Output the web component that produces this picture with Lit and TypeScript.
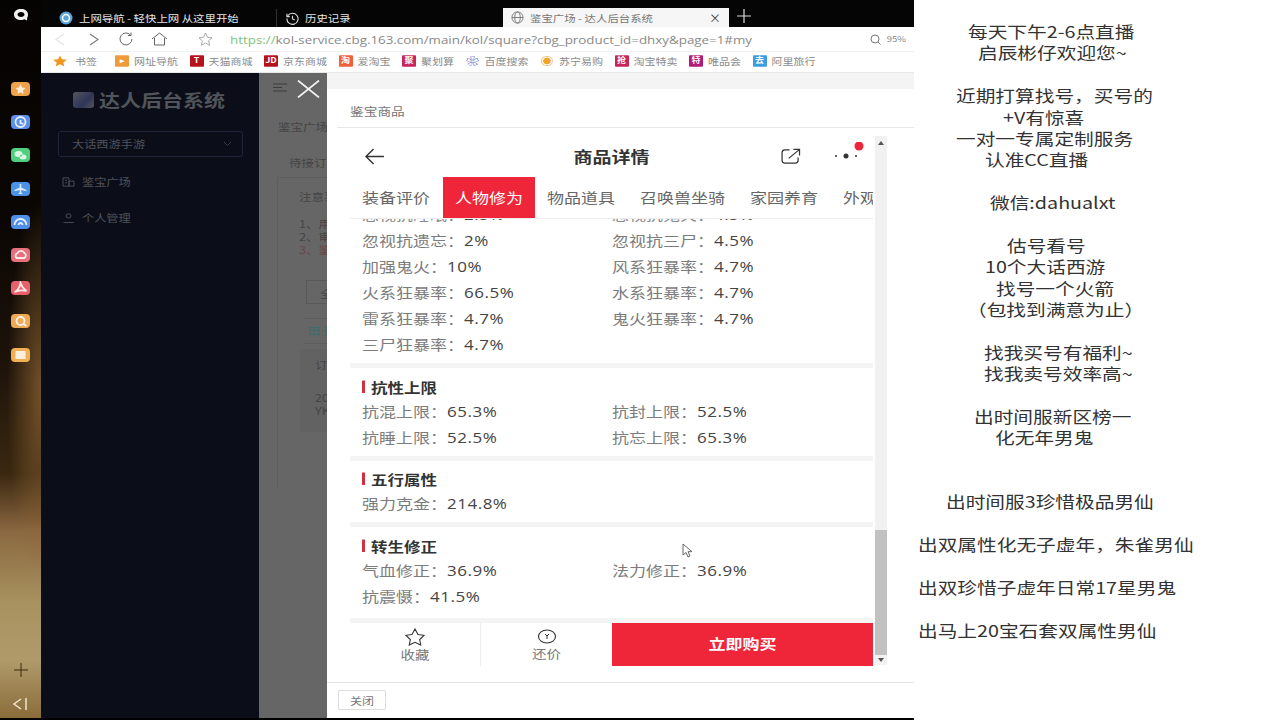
import { LitElement, html, css, svg } from "lit";
import { customElement } from "lit/decorators.js";

const lines: [string, number][] = [
  ["每天下午2-6点直播", 54],
  ["启辰彬仔欢迎您~", 64],
  ["", 0],
  ["近期打算找号，买号的", 42],
  ["+V有惊喜", 89],
  ["一对一专属定制服务", 42],
  ["认准CC直播", 71],
  ["", 0],
  ["微信:dahualxt", 76],
  ["", 0],
  ["估号看号", 93],
  ["10个大话西游", 71],
  ["找号一个火箭", 82],
  ["（包找到满意为止）", 53],
  ["", 0],
  ["找我买号有福利~", 70],
  ["找我卖号效率高~", 70],
  ["", 0],
  ["出时间服新区榜一", 60],
  ["化无年男鬼", 81],
  ["", 0],
  ["", 0],
  ["出时间服3珍惜极品男仙", 32],
  ["", 0],
  ["出双属性化无子虚年，朱雀男仙", 4],
  ["", 0],
  ["出双珍惜子虚年日常17星男鬼", 4],
  ["", 0],
  ["出马上20宝石套双属性男仙", 4],
];

const bookmarks: [string, string, string][] = [
  ["T", "#b5121b", "天猫商城"],
  ["JD", "#b5121b", "京东商城"],
  ["淘", "#f0603a", "爱淘宝"],
  ["聚", "#c8265a", "聚划算"],
];
const bookmarks2: [string, string, string][] = [
  ["抢", "#c8265a", "淘宝特卖"],
  ["特", "#b01a7a", "唯品会"],
  ["去", "#3d9be0", "阿里旅行"],
];

const dock: [string, string, boolean][] = [
  ["#eea24a", "M0-5 1.500-1.500 5-1 2.500 1.500 3 5 0 3.200-3 5-2.500 1.500-5-1-1.500-1.500Z", true],
  ["#5b8fe8", "M0-5A5 5 0 1 1 0 5 5 5 0 1 1 0-5M0-2V1L3 2", false],
  ["#4fd07e", "M-6-1a4 3 0 1 1 8 0a4 3 0 1 1-8 0M-1 2a3.500 2.500 0 1 0 7 0a3.500 2.500 0 1 0-7 0", true],
  ["#4a93e6", "M-.8-5H.8V-1.500L6 1V2.300L.8 1V3.500L2.500 5H-2.500L-.8 3.500V1L-6 2.300V1L-.8-1.500Z", true],
  ["#4f8fe8", "M-6 3A6 6 0 0 1 6 3M-2 3A2 2 0 0 1 2 3", false],
  ["#e8707c", "M-4 3A3 3 0 0 1-3-2 4 4 0 0 1 4-2 3 3 0 0 1 4 3Z", false],
  ["#e8606a", "M0-5C-1 0-3 3-6 4-2 2 2 2 6 3 3 1 1-2 0-5Z", false],
  ["#eeaa55", "M-4 0A4 4 0 1 1 4 0 4 4 0 1 1-4 0M3 3 6 5", false],
  ["#f0b056", "M-5-4H5V4H-5Z", true],
];

type Row = [string, string, string?, string?];
const rows: Row[] = [
  ["忽视抗遗忘：", "2%", "忽视抗三尸：", "4.5%"],
  ["加强鬼火：", "10%", "风系狂暴率：", "4.7%"],
  ["火系狂暴率：", "66.5%", "水系狂暴率：", "4.7%"],
  ["雷系狂暴率：", "4.7%", "鬼火狂暴率：", "4.7%"],
  ["三尸狂暴率：", "4.7%"],
];

const tabNames: [string, string][] = [
  ["装备评价", "t0"],
  ["人物修为", "on"],
  ["物品道具", "t2"],
  ["召唤兽坐骑", "t2"],
  ["家园养育", "t2"],
  ["外观", "t3"],
];

@customElement("app-root")
export class AppRoot extends LitElement {
  static styles = css`
    :host { display: block; width: 1280px; height: 720px; overflow: hidden; background: #fff;
      font-family: "Noto Sans CJK SC", "Open Sans", sans-serif; }
    .sy { display: inline-block; transform: scaleY(0.83); white-space: nowrap; }
    .root { display: flex; width: 1280px; height: 720px; }
    .shot { width: 914px; height: 720px; background: #000; display: flex; flex: none; padding-bottom: 2px; box-sizing: border-box; }
    .dock { width: 41px; flex: none; display: flex; flex-direction: column; align-items: center;
      background:
        radial-gradient(ellipse 34px 190px at 100% 390px, rgba(140, 100, 50, 0.75), rgba(140, 100, 50, 0)),
        linear-gradient(180deg, #050302 0%, #0a0603 30%, #1c120a 50%, #3a2710 66%, #8a6840 74%, #a8925f 84%, #b09a6a 92%, #8a6c3a 100%);
      padding-top: 6px; box-sizing: border-box; }
    .logo { width: 20px; height: 18px; margin-bottom: 58px; }
    .app { width: 19px; height: 14px; border-radius: 4px; margin-bottom: 19.2px; display: flex; flex: none; }
    .app svg { width: 19px; height: 14px; }
    .spacer { flex: 1; }
    .plus { width: 14px; height: 14px; margin-bottom: 20px; }
    .collapse { width: 18px; height: 14px; margin-bottom: 7px; }
    .browser { flex: 1; display: flex; flex-direction: column; min-width: 0; }
    .tabs { height: 27px; flex: none; display: flex; align-items: stretch; background: #050505; font-size: 11.4px; color: #e4e4e4; }
    .tab { display: flex; align-items: center; gap: 6px; padding-left: 18px; }
    .tab1 { width: 236px; box-sizing: border-box; border-right: 1px solid #333; margin: 9px 0 0; }
    .tab2 { width: 226px; box-sizing: border-box; padding-left: 9px; margin-top: 9px; }
    .tab3 { width: 226px; box-sizing: border-box; background: #f6f6f6; color: #777; margin-top: 8px; padding-left: 8px; }
    .tab3 .x { margin-left: auto; margin-right: 8px; color: #444; font-size: 12px; }
    .newtab { width: 16px; height: 16px; margin: 8px 0 0 7px; }
    .toolbar { height: 25px; flex: none; background: #fff; display: flex; align-items: center; color: #888; border-bottom: 1px solid #f0f0f0; box-sizing: border-box; }
    .nav { display: flex; align-items: center; width: 189px; flex: none; }
    .nav svg { flex: none; }
    .nav .n1 { margin-left: 14px; }
    .nav .n2 { margin-left: 24px; }
    .nav .n3 { margin-left: 19px; }
    .nav .n4 { margin-left: 17px; }
    .nav .n5 { margin-left: 30px; }
    .url { font-family: "Open Sans", sans-serif; font-size: 13.37px; color: #888; padding-top: 1px; }
    .url b { font-weight: 400; color: #7cc47c; }
    .zoomv { margin-left: auto; padding-right: 8px; display: flex; align-items: center; gap: 6px; font-size: 9.5px; color: #888; }
    .bookmarks { height: 20px; flex: none; background: #fff; display: flex; align-items: center; font-size: 11px; color: #8a8a8a; padding: 0 0 2px 12px; box-sizing: border-box; }
    .bm { display: flex; align-items: center; gap: 5px; margin-right: 11.500px; white-space: nowrap; transform: scaleY(0.83); flex: none; }
    .bm.first { gap: 8px; margin-right: 18px; }
    .ic { width: 14px; height: 14px; font-size: 9px; font-weight: 700; color: #fff; text-align: center; line-height: 14px; border-radius: 1px; flex: none; }
    .page { flex: 1; display: flex; min-height: 0; position: relative; border-top: 1px solid #e8e8e8; }
    .side { width: 218px; flex: none; background: #0b0e18; color: #585b62; display: flex; flex-direction: column; }
    .brand { display: flex; align-items: center; gap: 5px; padding: 14px 0 0 32px; font-size: 21px; font-weight: 700; color: #51545a; height: 39px; box-sizing: border-box; line-height: 24px; }
    .brand i { width: 21px; height: 16px; border-radius: 3px; background: linear-gradient(135deg, #55565e, #2e3557 60%, #555); flex: none; }
    .select { margin: 19px 0 0 17px; width: 185px; height: 26px; border: 1px solid #20243a; border-radius: 3px; display: flex; align-items: center; justify-content: space-between; padding: 0 10px 0 13px; box-sizing: border-box; font-size: 12.2px; color: #4f525a; }
    .menu { display: flex; align-items: center; gap: 7px; padding-left: 21px; font-size: 12.2px; height: 18px; color: #4f525a; transform: scaleY(0.83); }
    .menu.first { margin-top: 16px; margin-bottom: 18px; }
    .dim { width: 68px; flex: none; background: linear-gradient(#5d5d5d, #5d5d5d) 18px 104px / 1px 310px no-repeat, #666; display: flex; flex-direction: column; color: #444; font-size: 12.5px; overflow: hidden; white-space: nowrap; }
    .dim .hb { width: 14px; height: 9px; margin: 10px 0 0 14px; flex: none; }
    .dim .crumb { margin: 27px 0 0 19px; height: 16px; line-height: 16px; transform: scaleY(0.83); flex: none; }
    .dim .card { margin: 20px 0 0 30px; height: 16px; line-height: 16px; transform: scaleY(0.83); flex: none; }
    .dim .note { margin: 6px 0 0 18px; border-top: 1px solid #5d5d5d; padding: 12px 0 0 22px; height: 103px; box-sizing: border-box; line-height: 13px; flex: none; }
    .dim .note p { margin: 0; transform: scaleY(0.83); }
    .dim .note .l1 { margin-top: 14px; }
    .dim .note .red { color: #6a4545; }
    .dim .fbox { margin: 0 0 0 47px; width: 60px; height: 24px; border: 1px solid #5a5a5a; padding: 3px 0 0 13px; box-sizing: border-box; flex: none; }
    .dim .tbl { margin: 14px 0 0 44px; border-top: 1px solid #5d5d5d; border-bottom: 1px solid #5d5d5d; height: 26px; padding-left: 5px; box-sizing: border-box; color: #3b6b6b; font-size: 12px; line-height: 24px; flex: none; }
    .dim .tbl2 { margin: 5px 0 0 41px; background: #626262; height: 83px; padding: 9px 0 0 15px; box-sizing: border-box; line-height: 13px; flex: none; }
    .dim .tbl2 div { transform: scaleY(0.83); transform-origin: 0 50%; }
    .dim .tbl2 .d1 { margin-top: 20px; }
    .closex { position: absolute; left: 256px; top: 7px; width: 23px; height: 18px; }
    .modal { width: 587px; flex: none; background: #fff; display: flex; flex-direction: column; min-width: 0; }
    .mtop { height: 16px; flex: none; background: #f4f4f4; }
    .mtitle { height: 39px; flex: none; display: flex; align-items: center; font-size: 13.700px; color: #777; border-bottom: 1px solid #e8e8e8; box-sizing: border-box; margin-left: 10px; padding: 6px 0 0 13px; }
    .mbody { flex: 1; min-height: 0; display: flex; padding: 8px 0 0 23px; }
    .phone { width: 523px; flex: none; display: flex; flex-direction: column; height: 530px; position: relative; }
    .head { height: 41px; flex: none; display: flex; align-items: center; justify-content: center; position: relative; font-size: 19px; font-weight: 700; color: #333; padding-bottom: 2px; box-sizing: border-box; }
    .head .back { position: absolute; left: 14px; top: 12px; }
    .head .share { position: absolute; left: 431px; top: 12px; }
    .head .dots { position: absolute; left: 484px; top: 6px; }
    .tabsbar { height: 41px; flex: none; display: flex; align-items: stretch; font-size: 17px; color: #666; overflow: hidden; white-space: nowrap; padding-left: 12px; box-sizing: border-box; line-height: 39px; }
    .tabsbar > div { flex: none; }
    .tabsbar .t2 { margin-right: 25px; }
    .tabsbar .on { background: #ef2639; color: #fff; width: 92px; text-align: center; margin: 0 12px 0 13px; }
    .scrolled { flex: 1; min-height: 0; overflow: hidden; border-top: 1px solid #eee; position: relative; }
    .cut { height: 9px; overflow: hidden; position: relative; }
    .cut .row { position: absolute; left: 0; right: 0; top: -17px; color: #888; }
    .row { display: flex; height: 26px; align-items: center; font-size: 17px; color: #7c7c7c; padding: 0 0 4px 12px; box-sizing: border-box; transform: scaleY(0.83); }
    .cell { width: 250px; flex: none; white-space: nowrap; }
    .cell b { font-weight: 400; color: #444; letter-spacing: 0.5px; font-family: "Open Sans", sans-serif; }
    .sep { height: 5px; background: #f4f4f4; margin: 5px 0 0 0; }
    .sep.last { margin-top: 8px; }
    .gt { display: flex; align-items: center; gap: 6px; padding: 0 0 3px 12px; box-sizing: border-box; font-size: 16.500px; font-weight: 700; color: #333; height: 20px; margin-top: 9.500px; margin-bottom: 1px; transform: scaleY(0.83); }
    .gt i { width: 3px; height: 15px; background: #d1303f; flex: none; }
    .actions { height: 43px; flex: none; display: flex; background: #fff; position: absolute; left: 0; right: 0; bottom: 0; }
    .act { display: flex; flex-direction: column; align-items: center; justify-content: center; font-size: 14.500px; color: #777; line-height: 15px; gap: 1px; }
    .act.a { width: 131px; border-right: 1px solid #eee; box-sizing: border-box; }
    .act.b { width: 131px; box-sizing: border-box; }
    .buy { flex: 1; background: #ef2639; color: #fff; font-size: 17px; font-weight: 700; display: flex; align-items: center; justify-content: center; padding-bottom: 4px; box-sizing: border-box; }
    .cursor { position: absolute; left: 332px; top: 407px; }
    .sb { width: 12px; flex: none; background: #f1f1f1; height: 529px; display: flex; flex-direction: column; margin-left: 2px; }
    .sb .sp { height: 394px; display: flex; justify-content: center; padding-top: 5px; box-sizing: border-box; flex: none; }
    .sb .th { height: 125px; background: #c1c1c1; flex: none; }
    .sb .dn { flex: 1; display: flex; justify-content: center; align-items: center; }
    .mfoot { height: 36px; flex: none; border-top: 1px solid #e6e6e6; padding: 7px 0 0 11px; box-sizing: border-box; }
    .btn { width: 48px; height: 20px; border: 1px solid #ddd; box-sizing: border-box; font-size: 12px; color: #777; display: flex; align-items: center; justify-content: center; border-radius: 1px; }
    .right { flex: 1; padding-top: 20px; font-size: 19.700px; line-height: 21.390px; color: #333; white-space: nowrap; }
    .ln { height: 21.390px; transform: scaleY(0.83); }
  `;

  private row(r: Row) {
    return html`<div class="row">
      <div class="cell">${r[0]}<b>${r[1]}</b></div>
      ${r[2] ? html`<div class="cell">${r[2]}<b>${r[3]}</b></div>` : ""}
    </div>`;
  }

  private bm(b: [string, string, string]) {
    return html`<div class="bm"><span class="ic" style="background:${b[1]}">${b[0]}</span>${b[2]}</div>`;
  }

  render() {
    return html`<div class="root">
      <div class="shot">
        <div class="dock">
          <svg class="logo" viewBox="0 0 20 18"><path d="M10 3c-4 0-7 2-7 5.500S6 14 10 14c1.500 0 2.500-.3 3.500-.8L16 14.500l.3-3c.5-.8.7-1.800.7-3C17 5 14 3 10 3Zm0 3c2 0 3.500 1 3.500 2.500S12 11 10 11 6.500 10 6.500 8.500 8 6 10 6Z" fill="#f2f2f2"/></svg>
          ${dock.map(([c, d, f]) => html`<div class="app" style="background:${c}">
            <svg viewBox="-9.500 -7 19 14">${f
              ? svg`<path d=${d} fill="#fff" opacity=".8"/>`
              : svg`<path d=${d} fill="none" stroke="#fff" stroke-width="1.800" opacity=".85"/>`}</svg>
          </div>`)}
          <div class="spacer"></div>
          <svg class="plus" viewBox="0 0 14 14"><path d="M7 0v14M0 7h14" stroke="#3a2a10" stroke-width="1"/></svg>
          <svg class="collapse" viewBox="0 0 18 14"><path d="M9 2 2 7l7 5M14 1v12" fill="none" stroke="#efe6d2" stroke-width="1.500"/></svg>
        </div>
        <div class="browser">
          <div class="tabs">
            <div class="tab tab1">
              <svg width="14" height="14" viewBox="0 0 14 14"><circle cx="7" cy="7" r="6.500" fill="#5aa6dc"/><circle cx="7" cy="7" r="3.500" fill="none" stroke="#fff" stroke-width="1.500"/></svg>
              <span class="sy">上网导航 - 轻快上网 从这里开始</span>
            </div>
            <div class="tab tab2">
              <svg width="13" height="13" viewBox="0 0 14 14"><path d="M2 4a6 6 0 1 1-1 3M1 2v3h3M7 4v3.500l2.500 1" fill="none" stroke="#ddd" stroke-width="1.200"/></svg>
              <span class="sy">历史记录</span>
            </div>
            <div class="tab tab3">
              <svg width="13" height="13" viewBox="0 0 14 14"><g fill="none" stroke="#777"><circle cx="7" cy="7" r="6"/><ellipse cx="7" cy="7" rx="3" ry="6"/><path d="M1 7h12"/></g></svg>
              <span class="sy">鉴宝广场 - 达人后台系统</span>
              <span class="x">×</span>
            </div>
            <svg class="newtab" viewBox="0 0 16 16"><path d="M8 1v14M1 8h14" stroke="#ddd" stroke-width="1.200"/></svg>
          </div>
          <div class="toolbar">
            <div class="nav">
              <svg class="n1" width="10" height="13" viewBox="0 0 10 13"><path d="M9 1 1 6.500 9 12" fill="none" stroke="#e3e3e3" stroke-width="1.100"/></svg>
              <svg class="n2" width="10" height="13" viewBox="0 0 10 13"><path d="M1 1l8 5.500L1 12" fill="none" stroke="#777" stroke-width="1.100"/></svg>
              <svg class="n3" width="16" height="14" viewBox="0 0 16 14"><path d="M12.500 3a6 6 0 1 0 1.500 4M13 .5V3.500H10" fill="none" stroke="#666" stroke-width="1"/></svg>
              <svg class="n4" width="17" height="14" viewBox="0 0 17 14"><path d="M1 7l7.500-6L16 7M3.500 6v7h10V6" fill="none" stroke="#666" stroke-width="1"/></svg>
              <svg class="n5" width="15" height="14" viewBox="0 0 15 14"><path d="M7.500 1l2 4.300 4.500.5-3.400 3 1 4.500-4.100-2.300-4.100 2.300 1-4.500-3.400-3 4.500-.5Z" fill="none" stroke="#aaa" stroke-width="1"/></svg>
            </div>
            <span class="url sy"><b>https://</b>kol-service.cbg.163.com/main/kol/square?cbg_product_id=dhxy&page=1#my</span>
            <div class="zoomv">
              <svg width="11" height="11" viewBox="0 0 11 11"><circle cx="5" cy="5" r="4" fill="none" stroke="#777"/><path d="M8 8l2.500 2.500" stroke="#777"/></svg>
              <span class="sy">95%</span>
            </div>
          </div>
          <div class="bookmarks">
            <div class="bm first"><svg width="14" height="14" viewBox="0 0 14 13"><path d="M7 0l2 4.500 5 .5-3.700 3.200 1.100 4.800L7 10.500 2.600 13l1.100-4.800L0 5l5-.5Z" fill="#f0961e"/></svg>书签</div>
            <div class="bm"><span class="ic" style="background:#ef9a3c">▸</span>网址导航</div>
            ${bookmarks.map((b) => this.bm(b))}
            <div class="bm"><span class="ic" style="color:#3a47b8;font-size:13px">❀</span>百度搜索</div>
            <div class="bm"><span class="ic" style="color:#f0a428;font-size:13px">◉</span>苏宁易购</div>
            ${bookmarks2.map((b) => this.bm(b))}
          </div>
          <div class="page">
            <aside class="side">
              <div class="brand"><i></i><span class="sy">达人后台系统</span></div>
              <div class="select"><span class="sy">大话西游手游</span>
                <svg width="9" height="6" viewBox="0 0 9 6"><path d="M1 1l3.500 3.500L8 1" fill="none" stroke="#3a3d48"/></svg>
              </div>
              <div class="menu first">
                <svg width="13" height="14" viewBox="0 0 13 12"><path d="M1 1h6v10H1zM7 5h5v6H7zM3 4h2M3 7h2" fill="none" stroke="#4f525a"/></svg>鉴宝广场
              </div>
              <div class="menu">
                <svg width="13" height="14" viewBox="0 0 13 12"><circle cx="6.500" cy="3.500" r="2.500" fill="none" stroke="#4f525a"/><path d="M1.500 11.500h10" stroke="#4f525a"/></svg>个人管理
              </div>
            </aside>
            <div class="dim">
              <svg class="hb" viewBox="0 0 14 9"><path d="M0 1h14M0 4.500h9M0 8h14" stroke="#3d3d3d" stroke-width="1.200"/></svg>
              <div class="crumb">鉴宝广场</div>
              <div class="card">待接订单</div>
              <div class="note"><p>注意事项</p><p class="l1">1、用户</p><p>2、审核</p><p class="red">3、鉴宝</p></div>
              <div class="fbox"><span class="sy">全部</span></div>
              <div class="tbl"><span class="sy">田 列表</span></div>
              <div class="tbl2"><div>订单</div><div class="d1">2021</div><div>YK</div></div>
            </div>
            <svg class="closex" viewBox="0 0 23 18"><path d="M1 .5l21 17M22 .5 1 17.500" stroke="#f2f2f2" stroke-width="1.700"/></svg>
            <section class="modal">
              <div class="mtop"></div>
              <div class="mtitle"><span class="sy">鉴宝商品</span></div>
              <div class="mbody">
                <div class="phone">
                  <div class="head">
                    <svg class="back" width="21" height="17" viewBox="0 0 22 18"><path d="M21 9H2M10 1 2 9l8 8" fill="none" stroke="#333" stroke-width="1.500"/></svg>
                    <span class="sy">商品详情</span>
                    <svg class="share" width="21" height="17" viewBox="0 0 22 18"><path d="M9 2H4a3 3 0 0 0-3 3v8a3 3 0 0 0 3 3h11a3 3 0 0 0 3-3v-3M8 11 19 2M13 1.500h6.500V8" fill="none" stroke="#333" stroke-width="1.300"/></svg>
                    <svg class="dots" width="30" height="20" viewBox="0 0 30 20"><circle cx="2" cy="14" r="1" fill="#333"/><circle cx="12" cy="14" r="2.500" fill="#333"/><circle cx="22" cy="14" r="1" fill="#333"/><circle cx="25" cy="4" r="4.500" fill="#ef2639"/></svg>
                  </div>
                  <div class="tabsbar">
                    ${tabNames.map(([t, c]) => html`<div class=${c}><span class="sy">${t}</span></div>`)}
                  </div>
                  <div class="scrolled">
                    <div class="cut">${this.row(["忽视抗睡眠：", "2.5%", "忽视抗鬼火：", "4.5%"])}</div>
                    ${rows.map((r) => this.row(r))}
                    <div class="sep"></div>
                    <div class="gt"><i></i>抗性上限</div>
                    ${this.row(["抗混上限：", "65.3%", "抗封上限：", "52.5%"])}
                    ${this.row(["抗睡上限：", "52.5%", "抗忘上限：", "65.3%"])}
                    <div class="sep"></div>
                    <div class="gt"><i></i>五行属性</div>
                    ${this.row(["强力克金：", "214.8%"])}
                    <div class="sep"></div>
                    <div class="gt"><i></i>转生修正</div>
                    ${this.row(["气血修正：", "36.9%", "法力修正：", "36.9%"])}
                    ${this.row(["抗震慑：", "41.5%"])}
                    <div class="sep last"></div>
                  </div>
                  <div class="actions">
                    <div class="act a">
                      <svg width="24" height="18" viewBox="0 0 22 18"><path d="M11 1l3 5.500 6 .8-4.300 4.200 1 5.500L11 14.300 5.300 17l1-5.500L2 7.300l6-.8Z" fill="none" stroke="#333" stroke-width="1.100"/></svg>
                      <span class="sy">收藏</span>
                    </div>
                    <div class="act b">
                      <svg width="20" height="16" viewBox="0 0 20 16"><ellipse cx="10" cy="7.500" rx="8.500" ry="6.500" fill="none" stroke="#333" stroke-width="1.100"/><path d="M8 5l2 2 2-2M10 7v3" fill="none" stroke="#333"/></svg>
                      <span class="sy">还价</span>
                    </div>
                    <div class="buy"><span class="sy">立即购买</span></div>
                  </div>
                  <svg class="cursor" width="12" height="15" viewBox="0 0 12 15"><path d="M1 1v11l3-2.500 2 4.500 2-1-2-4.300h4Z" fill="#fff" stroke="#555" stroke-width=".9"/></svg>
                </div>
                <div class="sb">
                  <div class="sp"><svg width="6" height="4" viewBox="0 0 6 4"><path d="M3 0l3 4H0Z" fill="#555"/></svg></div>
                  <div class="th"></div>
                  <div class="dn"><svg width="6" height="4" viewBox="0 0 6 4"><path d="M3 4 6 0H0Z" fill="#555"/></svg></div>
                </div>
              </div>
              <div class="mfoot"><div class="btn"><span class="sy">关闭</span></div></div>
            </section>
          </div>
        </div>
      </div>
      <div class="right">
        ${lines.map(([t, x]) => html`<div class="ln" style="padding-left:${x}px">${t}</div>`)}
      </div>
    </div>`;
  }
}
